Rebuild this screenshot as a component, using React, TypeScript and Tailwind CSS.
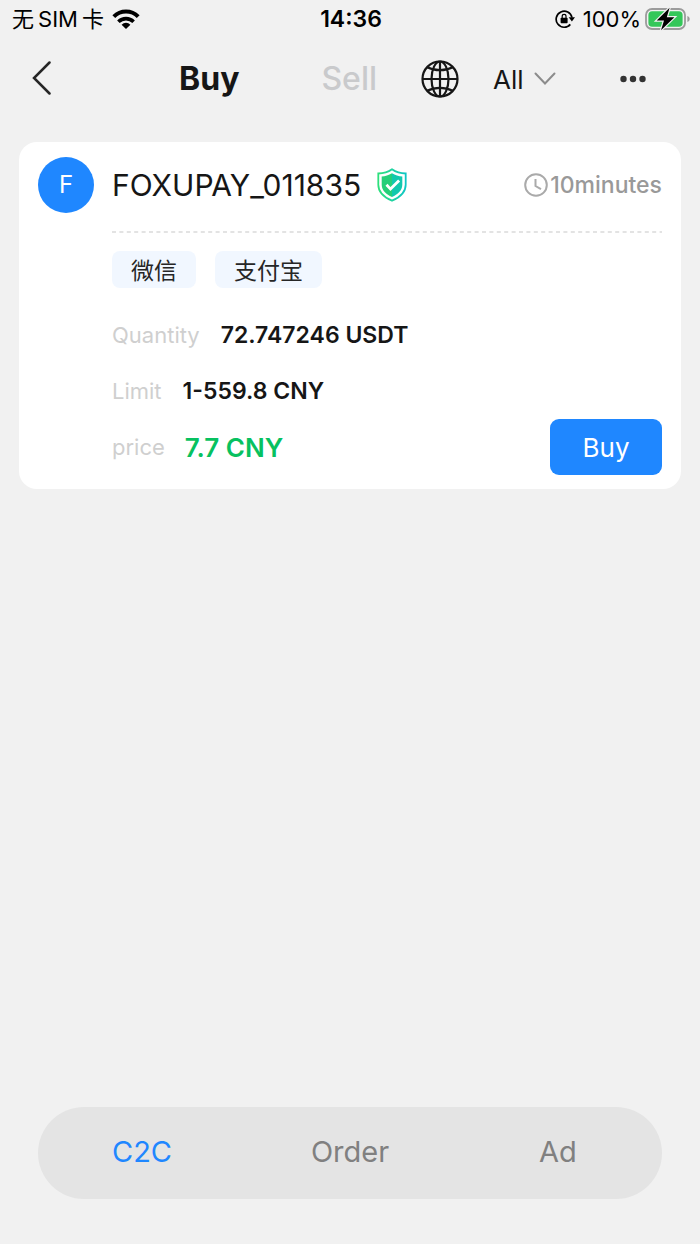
const tags = ["微信", "支付宝"];

const details = [
  { label: "Quantity", value: "72.747246 USDT" },
  { label: "Limit", value: "1-559.8 CNY" },
];

const navItems = [
  { name: "C2C", path: "#c2c", active: true },
  { name: "Order", path: "#order", active: false },
  { name: "Ad", path: "#ad", active: false },
];

function WifiIcon() {
  return (
    <svg width="28" height="20" viewBox="0 0 28 20" fill="none" stroke="#000" strokeWidth="4">
      <path d="M1.8 7.6a17.3 17.3 0 0 1 24.4 0" />
      <path d="M6.4 12.8a10.8 10.8 0 0 1 15.2 0" strokeWidth="3.6" />
      <path d="M14 20l-4.4-4.3a6.2 6.2 0 0 1 8.8 0z" fill="#000" stroke="none" />
    </svg>
  );
}

function RotationLockIcon() {
  return (
    <svg width="20" height="20" viewBox="0 0 20 20" fill="none">
      <path d="M15.3 15.4A8 8 0 1 1 17 8.6" stroke="#000" strokeWidth="1.7" />
      <path d="M13.7 8.3h6.3l-3.1 4.3z" fill="#000" />
      <rect x="5.6" y="8.8" width="7" height="5.4" rx="0.8" fill="#000" />
      <path d="M7.2 9V7.3a1.9 1.9 0 0 1 3.8 0V9" stroke="#000" strokeWidth="1.2" />
    </svg>
  );
}

function BatteryIcon() {
  return (
    <svg width="45" height="24" viewBox="0 0 45 24" fill="none">
      <rect x="1" y="2" width="39" height="20" rx="6" stroke="#9b9b9b" strokeWidth="1.8" />
      <path d="M42.4 9v6c1.5-.5 2.3-1.6 2.3-3s-.8-2.5-2.3-3z" fill="#9b9b9b" />
      <rect x="3.4" y="4.3" width="34.2" height="15.4" rx="3.8" fill="#34c759" />
      <path
        d="M24.6 0.8L11.7 13.6h7.3l-3 9.6L29.4 10.2h-7.6z"
        fill="#000"
        stroke="#f1f1f1"
        strokeWidth="2.4"
        paintOrder="stroke"
      />
    </svg>
  );
}

function GlobeIcon() {
  return (
    <svg width="38" height="38" viewBox="0 0 38 38" fill="none" stroke="#161616" strokeWidth="2.2">
      <circle cx="19" cy="19" r="17.5" />
      <ellipse cx="19" cy="19" rx="8.5" ry="17.5" />
      <path d="M19 1.5v35M1.5 19h35" />
      <path d="M6.3 7.2c7.5 4 17.9 4 25.4 0M6.3 30.8c7.5-4 17.9-4 25.4 0" />
    </svg>
  );
}

function ShieldIcon() {
  return (
    <svg width="30" height="34" viewBox="0 0 30 34">
      <defs>
        <linearGradient id="shield" x1="0" y1="0" x2="1" y2="0">
          <stop offset="0" stopColor="#2ee07c" />
          <stop offset="1" stopColor="#0fc6c4" />
        </linearGradient>
      </defs>
      <path
        d="M15 1.3c4 2.9 8.6 4.2 13.7 4.2v11.3c0 7.6-6.5 12.9-13.7 15.9C7.8 29.7 1.3 24.4 1.3 16.8V5.5C6.4 5.5 11 4.2 15 1.3z"
        fill="#fff"
        stroke="url(#shield)"
        strokeWidth="1.8"
      />
      <path d="M15 5.3C11.8 7.3 8.3 8.3 4.7 8.6v8.2c0 5.6 4.6 9.7 10.3 12.3z" fill="#26cf79" />
      <path d="M15 5.3c3.2 2 6.7 3 10.3 3.3v8.2c0 5.6-4.6 9.7-10.3 12.3z" fill="#12c8ae" />
      <path d="M9.5 16.8l4 4.3 8.6-8.6" fill="none" stroke="#fff" strokeWidth="2.8" />
    </svg>
  );
}

function StatusBar() {
  return (
    <div className="grid h-[38px] grid-cols-[1fr_auto_1fr] items-center pr-[10px] pl-3 text-[22px] text-black">
      <div className="flex items-center gap-2">
        <div className="flex gap-1">
          <span>无</span>
          <span>SIM</span>
          <span>卡</span>
        </div>
        <WifiIcon />
      </div>
      <span className="text-[23px] font-semibold">14:36</span>
      <div className="flex items-center justify-end">
        <RotationLockIcon />
        <span className="mr-1 ml-2">100%</span>
        <BatteryIcon />
      </div>
    </div>
  );
}

function Header() {
  return (
    <header className="flex h-20 items-center pt-[2px] pr-[54px] pl-8">
      <button type="button" aria-label="Back">
        <svg width="20" height="36" viewBox="0 0 20 36" fill="none" stroke="#262626" strokeWidth="2.5" strokeLinecap="round">
          <path d="M17.5 1.5L2 17l15.500 15.500" />
        </svg>
      </button>
      <div className="mr-16 ml-auto flex items-center">
        <button type="button" className="text-[32px] font-bold text-[#161616]">
          Buy
        </button>
        <button type="button" className="ml-[82px] text-[32px] font-medium text-[#c9cacc]">
          Sell
        </button>
        <button type="button" aria-label="Region" className="ml-11">
          <GlobeIcon />
        </button>
        <label className="ml-[34px] flex items-center gap-[10px]">
          <select aria-label="Filter" className="appearance-none text-[26px] text-[#161616]">
            <option>All</option>
          </select>
          <svg width="22" height="14" viewBox="0 0 22 14" fill="none" stroke="#8c8c8c" strokeWidth="2" strokeLinecap="round">
            <path d="M1.5 1.5L11 11.500l9.500-10" />
          </svg>
        </label>
      </div>
      <button type="button" aria-label="More">
        <svg width="26" height="8" viewBox="0 0 26 8" fill="#333">
          <circle cx="3.5" cy="4" r="3.2" />
          <circle cx="13" cy="4" r="3.2" />
          <circle cx="22.5" cy="4" r="3.2" />
        </svg>
      </button>
    </header>
  );
}

function OfferCard() {
  return (
    <article className="mx-[19px] mt-6 flex gap-[18px] rounded-[18px] bg-white px-[19px] pt-[15px] pb-[14px]">
      <div className="flex h-14 w-14 shrink-0 items-center justify-center rounded-full bg-[#1f87ff] text-2xl text-white">
        F
      </div>
      <div className="flex-1">
        <div className="flex h-14 items-center">
          <h2 className="text-[30px] text-[#161616]">FOXUPAY_011835</h2>
          <span className="ml-4">
            <ShieldIcon />
          </span>
          <div className="ml-auto flex items-center gap-[2px] text-[23px] font-medium text-[#999]">
            <svg width="24" height="24" viewBox="0 0 24 24" fill="none" stroke="#aaa" strokeWidth="2">
              <circle cx="12" cy="12" r="10.8" />
              <path d="M11.5 6v7l5.500 3.200" />
            </svg>
            <span>10minutes</span>
          </div>
        </div>
        <svg width="100%" height="2" className="mt-[18px] block">
          <line x1="0" y1="1" x2="100%" y2="1" stroke="#e3e3e3" strokeWidth="2" strokeDasharray="4 3.4" />
        </svg>
        <div className="mt-[18px] flex gap-[19px]">
          {tags.map((tag) => (
            <span
              key={tag}
              className="flex h-[37px] items-center rounded-lg bg-[#f1f7ff] px-[19px] pt-1 text-[23px] text-[#262626]"
            >
              {tag}
            </span>
          ))}
        </div>
        <div className="mt-[19px] flex items-end justify-between">
          <dl>
            {details.map((item) => (
              <div key={item.label} className="flex h-14 items-center gap-[21px]">
                <dt className="text-[22px] text-[#cfcfcf]">{item.label}</dt>
                <dd className="text-[23px] font-semibold text-[#161616]">{item.value}</dd>
              </div>
            ))}
            <div className="flex h-14 items-center gap-5">
              <dt className="text-[22px] text-[#cfcfcf]">price</dt>
              <dd className="text-[26px] font-semibold text-[#07c160]">7.7 CNY</dd>
            </div>
          </dl>
          <button type="button" className="h-14 w-28 rounded-[9px] bg-[#1f87ff] text-[26px] text-white">
            Buy
          </button>
        </div>
      </div>
    </article>
  );
}

export default function App() {
  return (
    <div className="flex min-h-screen flex-col bg-[#f1f1f1] font-['Inter','Noto_Sans_CJK_SC',sans-serif]">
      <StatusBar />
      <Header />
      <main className="flex-1">
        <OfferCard />
      </main>
      <nav className="mx-[38px] mb-[45px] grid h-[92px] grid-cols-3 items-center rounded-full bg-[#e4e4e4] pb-[2px] text-center text-[29px]">
        {navItems.map((item) => (
          <a key={item.name} href={item.path} className={item.active ? "text-[#1f87ff]" : "text-[#808080]"}>
            {item.name}
          </a>
        ))}
      </nav>
    </div>
  );
}
